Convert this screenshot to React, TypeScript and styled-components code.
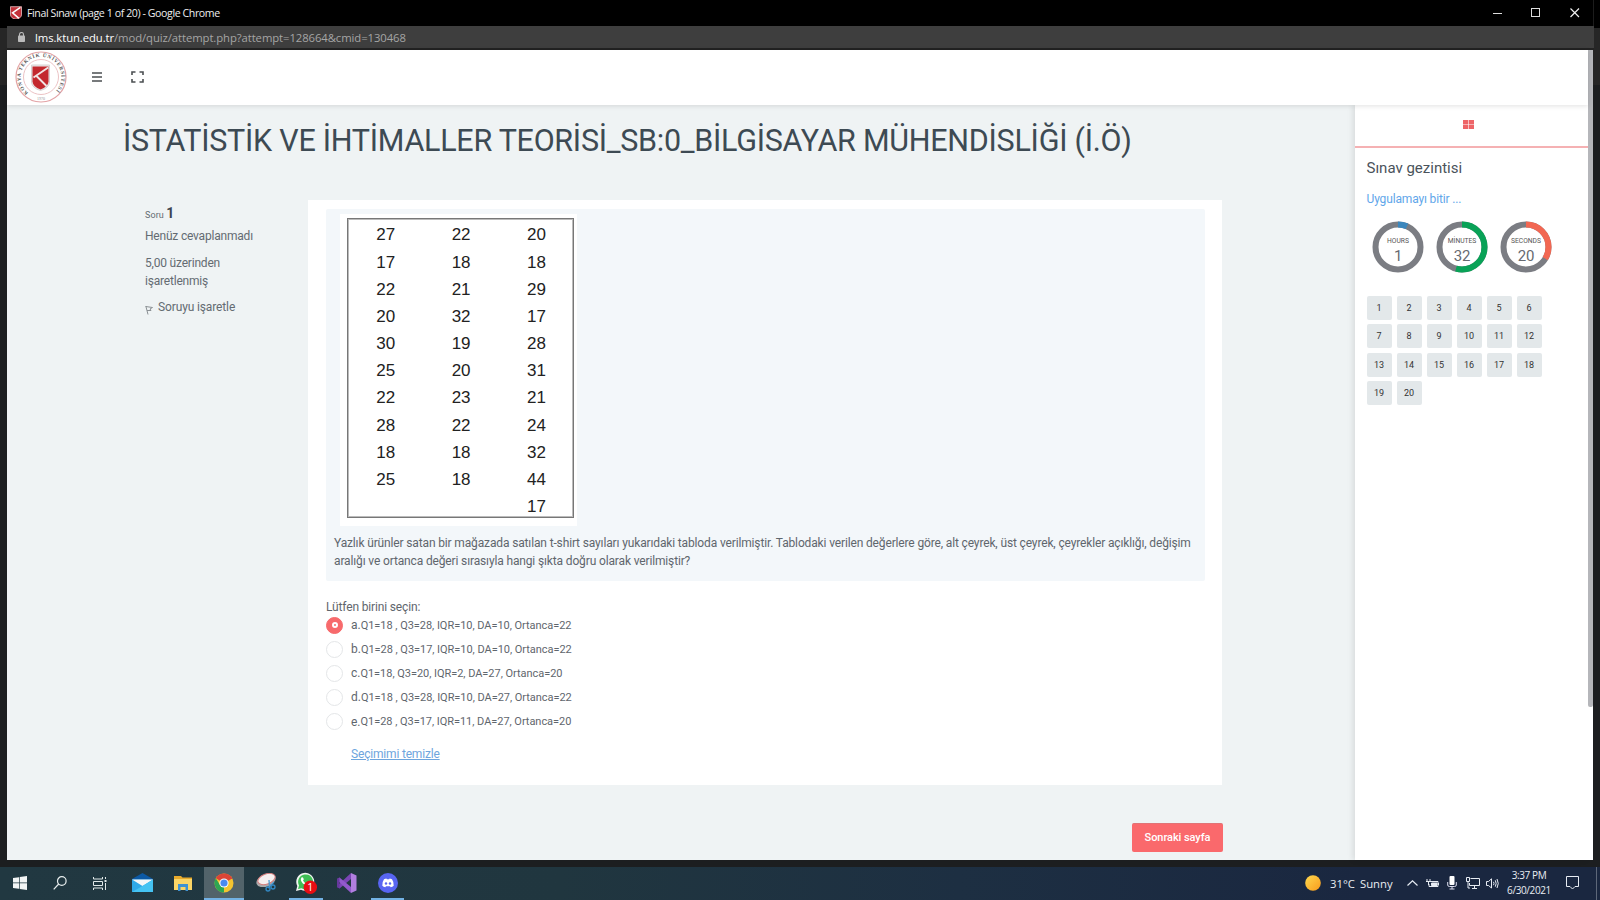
import React from "react";
import styled, { createGlobalStyle } from "styled-components";

const Global = createGlobalStyle`
  *,*::after{box-sizing:border-box}
  html,body{margin:0;padding:0;background:#1b1d1f;overflow:hidden}
  body{font-family:Roboto,"Liberation Sans",sans-serif;color:#5f666d}
  p,h1,h2{margin:0;font-weight:400}
`;
const Screen = styled.div`
  width:1600px;height:900px;display:flex;flex-direction:column;overflow:hidden;
  background:linear-gradient(180deg,#000 0 28px,#262626 28px 85px,#1c1e20 85px 100%);
`;
const ChromeWindow = styled.div`
  width:1587px;height:860px;margin:0 0 7px 7px;display:flex;flex-direction:column;flex:none;
`;
const TitleBar = styled.div`
  height:26px;flex:none;background:#000;display:flex;align-items:center;padding:0 13px 1px 3px;
  border-right:1px solid #1c1c1c;
`;
const WindowTitle = styled.span`
  flex:1;margin-left:5px;color:#eee;font:10.6px "Open Sans","Noto Sans",sans-serif;letter-spacing:-.41px;white-space:nowrap;
`;
const WindowButtons = styled.div`display:flex;gap:29px;align-items:center;`;
const AddressBar = styled.div`
  height:24px;flex:none;background:#3e3e3e;border-bottom:2px solid #222;display:flex;align-items:center;padding-left:11px;
`;
const Url = styled.span`
  margin-left:10px;font:11.3px "Open Sans","Noto Sans",sans-serif;color:#a5a5a5;white-space:nowrap;letter-spacing:-.08px;
  b{font-weight:400;color:#fff}
`;
const Page = styled.div`
  height:810px;display:flex;flex:none;background:#eff3f4;width:1586px;
`;
const PageBody = styled.div`width:1581px;display:flex;flex-direction:column;`;
const ScrollTrack = styled.div`width:5px;background:#fff;`;
const ScrollThumb = styled.div`height:657px;background:#b5b6ba;border-radius:0 0 2px 2px;`;
const NavBar = styled.div`
  height:55px;flex:none;background:#fff;display:flex;align-items:center;padding:0 0 1px 8px;
  box-shadow:0 1px 5px rgba(0,0,0,.12);z-index:1;
`;
const NavIcon = styled.div<{ $left: number }>`margin-left:${p => p.$left}px;display:flex;`;
const Columns = styled.div`flex:1;display:flex;min-height:0;`;
const Main = styled.div`width:1348px;padding:0 132px 0 116px;`;
const CourseTitle = styled.h1`
  font-size:30.5px;line-height:40px;height:95px;padding-top:16px;color:#3d4a53;white-space:nowrap;letter-spacing:-.27px;
`;
const Question = styled.div`display:flex;`;
const Info = styled.div`
  width:185px;padding:4px 50px 0 22px;font-size:12px;line-height:18px;color:#646b72;letter-spacing:-.2px;
`;
const QuestionNo = styled.p`
  font-size:9px;line-height:18px;height:18px;margin-bottom:5px;letter-spacing:.1px;
  b{font-size:14px;font-weight:700;color:#3d4450}
`;
const InfoLine = styled.p`margin-bottom:9px;`;
const FlagLine = styled.div`
  display:flex;align-items:center;gap:4px;margin-top:-1px;letter-spacing:-.13px;
  svg{margin-top:5px}
`;
const Card = styled.div`width:914px;height:585px;background:#fff;padding:9px 18px 0;`;
const Formulation = styled.div`
  height:372px;width:879px;background:#f3f7fa;padding:5px 8px 0;border-radius:2px;
`;
const TableFrame = styled.div`
  width:237px;height:312px;margin-left:6px;padding:4px 3px 0 7px;background:#fff;
`;
const NumberTable = styled.div`
  border:1px solid #777;outline:1px solid #bbb;outline-offset:-2px;height:300px;padding:2.4px 0 0;
  display:grid;grid-template-columns:repeat(3,75.4px);grid-auto-rows:27.18px;
  font:17px/27px "Liberation Sans",sans-serif;color:#222;text-align:center;
`;
const TextBlock = styled.div`padding-top:8px;`;
const QuestionText = styled.p`
  font-size:12px;line-height:18px;white-space:nowrap;letter-spacing:-.143px;
`;
const Prompt = styled.p`font-size:12px;line-height:18px;margin-top:17px;height:18px;letter-spacing:-.15px;`;
const Options = styled.div`margin-top:-3px;`;
const Option = styled.label`display:flex;align-items:center;height:24.15px;`;
const Radio = styled.span<{ $on: boolean }>`
  width:17px;height:17px;border-radius:50%;display:flex;align-items:center;justify-content:center;
  border:1px solid ${p => (p.$on ? "#f76a6c" : "#e4e6e8")};background:${p => (p.$on ? "#f76a6c" : "#fff")};
  &::after{content:"";display:${p => (p.$on ? "block" : "none")};width:6px;height:6px;border:2px solid #fff;border-radius:50%}
`;
const OptionLetter = styled.span`margin-left:8px;font-size:12px;`;
const OptionText = styled.span`font-size:11px;letter-spacing:-.04px;white-space:nowrap;`;
const ClearLink = styled.a`
  display:block;margin:11px 0 0 25px;font-size:12px;line-height:18px;color:#6ea5dd;text-decoration:underline;letter-spacing:-.18px;
`;
const NextButton = styled.button`
  display:block;width:91px;height:29px;margin:38px 0 0 auto;border:0;border-top:1px solid #e07376;border-radius:2px;
  background:#fa696c;color:#fff;font:500 11px Roboto,sans-serif;letter-spacing:-.06px;padding:0 0 2px;
`;
const Drawer = styled.aside`
  width:233px;background:#fff;box-shadow:-2px 0 6px rgba(0,0,0,.1);
`;
const DrawerTab = styled.div`
  height:43px;border-bottom:2px solid #f5b1b3;display:flex;justify-content:center;padding-top:15px;padding-right:6px;
`;
const DrawerBody = styled.div`padding:9px 0 0 11.5px;`;
const DrawerTitle = styled.h2`font-size:15px;line-height:22px;color:#4a535b;`;
const FinishLink = styled.a`display:block;margin-top:11px;font-size:12px;line-height:18px;color:#61a6ea;letter-spacing:-.15px;`;
const Timers = styled.div`display:flex;gap:12px;margin:13px 0 0 5.5px;height:52px;`;
const NumberGrid = styled.div`
  display:grid;grid-template-columns:repeat(6,25px);grid-auto-rows:24px;gap:4.35px 5px;margin-top:23px;
`;
const NumberCell = styled.div`
  background:#e3e8ea;border-radius:2px;color:#333;font-size:9px;display:flex;align-items:center;justify-content:center;
`;
const Taskbar = styled.div`
  height:33px;flex:none;display:flex;justify-content:space-between;
  background:linear-gradient(90deg,#213841 0,#20363f 35%,#1d2f42 60%,#1a2740 85%);
`;
const Apps = styled.div`display:flex;`;
const AppSlot = styled.div<{ $w: number; $active?: boolean; $open?: boolean }>`
  width:${p => p.$w}px;display:flex;align-items:center;justify-content:center;padding-bottom:1px;
  background:${p => (p.$active ? "#52636a" : "transparent")};
  box-shadow:${p => (p.$active || p.$open ? "inset 0 -2px #73b2e4" : "none")};
`;
const Tray = styled.div`
  display:flex;align-items:center;color:#e9edf2;font:11.3px "Open Sans","Noto Sans",sans-serif;white-space:nowrap;
`;
const TrayItem = styled.div<{ $w: number }>`width:${p => p.$w}px;display:flex;align-items:center;flex:none;padding-bottom:1px;`;
const Clock = styled.div`
  width:58px;font-size:10px;line-height:15px;text-align:center;letter-spacing:-.4px;padding:0 2px 2px 0;
`;
const ShowDesktop = styled.div`width:4px;height:33px;border-left:1px solid #5d6779;`;

const Shield = ({ size = 12 }: { size?: number }) => (
  <svg width={size} height={size * 1.15} viewBox="0 0 24 28">
    <path d="M0 1H24V18Q23 26 12 28Q1 26 0 18Z" fill="#c3323a" />
    <path d="M21 3L5 14L18 25" stroke="#fff" strokeWidth="3" fill="none" />
    <path d="M.8 1.500H23.200V18Q22 25 12 27Q2 25 .8 18Z" stroke="#d8c4c5" strokeWidth="1.600" fill="none" />
  </svg>
);

const Seal = () => (
  <svg width="52" height="52" viewBox="0 0 52 52">
    <defs>
      <path id="sealArc" d="M13.2 41.800A20.300 20.300 0 1 1 38.800 41.800" />
    </defs>
    <circle cx="26" cy="26" r="25" fill="#fff" stroke="#e3a3a6" strokeWidth="1.200" />
    <circle cx="26" cy="26" r="17.500" fill="none" stroke="#ecc3c5" strokeWidth="1" />
    <text fontSize="5.200" fontWeight="700" fill="#555" fontFamily="Liberation Serif, serif" letterSpacing=".7">
      <textPath href="#sealArc">KONYA TEKNİK ÜNİVERSİTESİ</textPath>
    </text>
    <text x="26" y="48.500" textAnchor="middle" fontSize="4" fill="#999" fontFamily="Liberation Serif, serif">1970</text>
    <path d="M16.500 14H34.500V31Q34 37 25.500 39.500Q17 37 16.500 31Z" fill="#ebe7e7" stroke="#d8d2d3" />
    <path d="M17.500 15.500H33.500V30.500Q33 36 25.500 38.500Q18 36 17.500 30.500Z" fill="#c3282e" />
    <path d="M33.200 16.500L18.500 26.500M21.500 25L31.500 35" stroke="#f1e4e4" strokeWidth="1.900" fill="none" />
  </svg>
);

const Ring = ({ label, value, fraction, color }: { label: string; value: number; fraction: number; color: string }) => {
  const c = 2 * Math.PI * 22.5;
  return (
    <svg width="52" height="52" viewBox="0 0 52 52">
      <circle cx="26" cy="26" r="22.500" fill="none" stroke="#7b7d83" strokeWidth="6" />
      <circle cx="26" cy="26" r="22.500" fill="none" stroke={color} strokeWidth="6"
        strokeDasharray={`${c * fraction} ${c}`} transform="rotate(-90 26 26)" />
      <text x="26" y="22" textAnchor="middle" fontSize="6.700" fill="#555" fontFamily="Roboto, sans-serif">{label}</text>
      <text x="26" y="40" textAnchor="middle" fontSize="15" fill="#666a70" fontFamily="Roboto, sans-serif" letterSpacing="-.3">{value}</text>
    </svg>
  );
};

const rows = [
  [27, 22, 20], [17, 18, 18], [22, 21, 29], [20, 32, 17], [30, 19, 28], [25, 20, 31],
  [22, 23, 21], [28, 22, 24], [18, 18, 32], [25, 18, 44], ["", "", 17],
];
const options = [
  ["a.", "Q1=18 , Q3=28, IQR=10, DA=10, Ortanca=22"],
  ["b.", "Q1=28 , Q3=17, IQR=10, DA=10, Ortanca=22"],
  ["c.", "Q1=18, Q3=20, IQR=2, DA=27, Ortanca=20"],
  ["d.", "Q1=18 , Q3=28, IQR=10, DA=27, Ortanca=22"],
  ["e.", "Q1=28 , Q3=17, IQR=11, DA=27, Ortanca=20"],
];

const WindowsIcon = () => (
  <svg width="14" height="14" viewBox="0 0 14 14" fill="#f2f5f5"><path d="M0 2L6 1.200V6.600H0ZM6.700 1.100L14 0V6.600H6.700ZM0 7.300H6V12.800L0 12ZM6.700 7.300H14V14L6.700 13Z" /></svg>
);
const SearchIcon = () => (
  <svg width="14" height="14" viewBox="0 0 14 14" fill="none" stroke="#e8eeee" strokeWidth="1.200"><circle cx="8.800" cy="5" r="4.300" /><path d="M5.700 8L.7 13.300" /></svg>
);
const TaskViewIcon = () => (
  <svg width="14" height="13" viewBox="0 0 14 13" fill="none" stroke="#e0e8e8"><path d="M.5 0V2H9.500V0M.5 13V11H9.500V13M.5 4.500H9.500V8.500H.5ZM12.500 0V2M12.500 6V13" /><path d="M11.500 4H13.500" strokeWidth="2" /></svg>
);
const MailIcon = () => (
  <svg width="21" height="20" viewBox="0 0 21 20"><path d="M0 6L10.500 0L21 6V9H0Z" fill="#0c59a4" /><path d="M0 6.500H21V19H0Z" fill="#2fa9e8" /><path d="M0 6.500H21L10.500 13Z" fill="#f4f6f7" /><path d="M21 6.500V19H0L10.500 13Z" fill="#45c3f2" /></svg>
);
const FolderIcon = () => (
  <svg width="22" height="17" viewBox="0 0 22 17"><path d="M0 1H7L8.500 2.500H18V15H0Z" fill="#e8ab2c" /><path d="M0 4H18V15H0Z" fill="#fbd566" /><path d="M4 16V9H14V16H11.500V12H6.500V16Z" fill="#3f92d2" /></svg>
);
const ChromeIcon = () => (
  <svg width="20" height="20" viewBox="0 0 20 20"><circle cx="10" cy="10" r="9.500" fill="#f4c430" /><path d="M10 10L1.800 5.200A9.500 9.500 0 0 1 18.300 5.500Z" fill="#dc4437" /><path d="M10 10L10 19.500A9.500 9.500 0 0 1 1.800 5.200L6 12Z" fill="#2ea653" /><path d="M10 5.500H18.300L17 4Z" fill="#dc4437" /><circle cx="10" cy="10" r="4.600" fill="#fff" /><circle cx="10" cy="10" r="3.600" fill="#4a8af0" /></svg>
);
const SnipIcon = () => (
  <svg width="21" height="20" viewBox="0 0 21 20"><ellipse cx="10" cy="7.500" rx="10" ry="6" transform="rotate(-20 10 7.500)" fill="#a9a9ab" /><ellipse cx="10.500" cy="6" rx="9" ry="5" transform="rotate(-20 10.500 6)" fill="#f5efef" stroke="#d57d7c" /><path d="M13 7L13.500 14M18 9L12 15" stroke="#4c9ad0" strokeWidth="1.300" /><circle cx="12" cy="16" r="2" fill="none" stroke="#3287c2" strokeWidth="1.300" /><circle cx="17" cy="14" r="2" fill="none" stroke="#3287c2" strokeWidth="1.300" /></svg>
);
const WhatsAppIcon = () => (
  <svg width="22" height="22" viewBox="0 0 22 22"><path d="M1 19L2.300 14A9 9 0 1 1 6 17.700Z" fill="#f2f5f2" /><path d="M3 17L4 13.500A7.500 7.500 0 1 1 6.500 16.200Z" fill="#3fbf55" /><path d="M6.500 5.500C7 5 8 5 8.300 6L8.800 7.500L8 8.500Q9 10.500 11 11.500L12 10.500L14 11.500Q14 14 11.500 13.500Q7 12 5.800 8Q5.800 6.500 6.500 5.500Z" fill="#fff" /><circle cx="15.300" cy="15.300" r="6.700" fill="#e90d12" /><text x="15.300" y="19" fill="#fff" fontSize="10.500" textAnchor="middle" fontFamily="Open Sans, sans-serif">1</text></svg>
);
const VsIcon = () => (
  <svg width="20" height="20" viewBox="0 0 20 20"><path d="M14 0L19.500 2.500V17.500L14 20Z" fill="#b17fe0" /><path d="M14 0V6L2.500 15.500L0 14V13L14 0Z" fill="#7b45b5" /><path d="M14 20V14L2.500 4.500L0 6V7L14 20Z" fill="#9259cc" /><path d="M0 6L2.500 4.500V15.500L0 14Z" fill="#67389c" /></svg>
);
const DiscordIcon = () => (
  <svg width="20" height="20" viewBox="0 0 20 20"><circle cx="10" cy="10" r="10" fill="#5865f2" /><path d="M6 6.200Q7.500 5.500 8.400 5.500L8.800 6.200H11.200L11.600 5.500Q12.500 5.500 14 6.200Q16 9 15.700 12.800Q14.500 14 12.700 14.200L12 13.200H8L7.300 14.200Q5.500 14 4.300 12.800Q4 9 6 6.200Z" fill="#fff" /><circle cx="8" cy="10.500" r="1.200" fill="#5865f2" /><circle cx="12" cy="10.500" r="1.200" fill="#5865f2" /></svg>
);

export default function App() {
  return (
    <>
      <Global />
      <Screen>
        <ChromeWindow>
          <TitleBar>
            <Shield />
            <WindowTitle>Final Sınavı (page 1 of 20) - Google Chrome</WindowTitle>
            <WindowButtons>
              <svg width="10" height="10" stroke="#ddd"><path d="M1 5.500H10" /></svg>
              <svg width="10" height="10" fill="none" stroke="#ddd"><rect x=".5" y=".5" width="8" height="8" /></svg>
              <svg width="10" height="10" fill="none" stroke="#eee" strokeWidth="1.200"><path d="M.5 .5L9 9M9 .5L.5 9" /></svg>
            </WindowButtons>
          </TitleBar>
          <AddressBar>
            <svg width="7" height="10" viewBox="0 0 7 10"><rect y="3.500" width="7" height="6.500" rx=".8" fill="#bbb" /><path d="M1.500 4V2.500A2 2 0 0 1 5.500 2.500V4" fill="none" stroke="#bbb" strokeWidth="1.100" /></svg>
            <Url><b>lms.ktun.edu.tr</b>/mod/quiz/attempt.php?attempt=128664&amp;cmid=130468</Url>
          </AddressBar>
          <Page>
            <PageBody>
              <NavBar>
                <Seal />
                <NavIcon $left={25}><svg width="10" height="10" stroke="#4b4f52" strokeWidth="1.500"><path d="M0 1H10M0 5H10M0 9H10" /></svg></NavIcon>
                <NavIcon $left={29}><svg width="13" height="12" fill="none" stroke="#4b4f52" strokeWidth="1.600"><path d="M1 4V1H4.500M8.500 1H12V4M12 8V11H8.500M4.500 11H1V8" /></svg></NavIcon>
              </NavBar>
              <Columns>
                <Main>
                  <CourseTitle>İSTATİSTİK VE İHTİMALLER TEORİSİ_SB:0_BİLGİSAYAR MÜHENDİSLİĞİ (İ.Ö)</CourseTitle>
                  <Question>
                    <Info>
                      <QuestionNo>Soru <b>1</b></QuestionNo>
                      <InfoLine>Henüz cevaplanmadı</InfoLine>
                      <InfoLine>5,00 üzerinden işaretlenmiş</InfoLine>
                      <FlagLine>
                        <svg width="9" height="10" fill="none" stroke="#8b9094"><path d="M.8 1L3 9.500M.8 1.500L7.500 2.500L5 4L6 5.500L2 5.500" /></svg>
                        Soruyu işaretle
                      </FlagLine>
                    </Info>
                    <Card>
                      <Formulation>
                        <TableFrame>
                          <NumberTable>{rows.flat().map((n, i) => <span key={i}>{n}</span>)}</NumberTable>
                        </TableFrame>
                        <TextBlock>
                          <QuestionText>Yazlık ürünler satan bir mağazada satılan t-shirt sayıları yukarıdaki tabloda verilmiştir. Tablodaki verilen değerlere göre, alt çeyrek, üst çeyrek, çeyrekler açıklığı, değişim</QuestionText>
                          <QuestionText>aralığı ve ortanca değeri sırasıyla hangi şıkta doğru olarak verilmiştir?</QuestionText>
                        </TextBlock>
                      </Formulation>
                      <Prompt>Lütfen birini seçin:</Prompt>
                      <Options>
                        {options.map(([l, t], i) => (
                          <Option key={l}><Radio $on={i === 0} /><OptionLetter>{l}</OptionLetter><OptionText>{t}</OptionText></Option>
                        ))}
                      </Options>
                      <ClearLink>Seçimimi temizle</ClearLink>
                    </Card>
                  </Question>
                  <NextButton>Sonraki sayfa</NextButton>
                </Main>
                <Drawer>
                  <DrawerTab>
                    <svg width="11" height="9" fill="#ee6568"><path d="M0 0H5.200V4.200H0ZM5.800 0H11V4.200H5.800ZM0 4.800H5.200V9H0ZM5.800 4.800H11V9H5.800Z" /></svg>
                  </DrawerTab>
                  <DrawerBody>
                    <DrawerTitle>Sınav gezintisi</DrawerTitle>
                    <FinishLink>Uygulamayı bitir ...</FinishLink>
                    <Timers>
                      <Ring label="HOURS" value={1} fraction={0.065} color="#3b87bd" />
                      <Ring label="MİNUTES" value={32} fraction={0.54} color="#09a257" />
                      <Ring label="SECONDS" value={20} fraction={0.335} color="#f26752" />
                    </Timers>
                    <NumberGrid>{Array.from({ length: 20 }, (_, i) => <NumberCell key={i}>{i + 1}</NumberCell>)}</NumberGrid>
                  </DrawerBody>
                </Drawer>
              </Columns>
            </PageBody>
            <ScrollTrack><ScrollThumb /></ScrollTrack>
          </Page>
        </ChromeWindow>
        <Taskbar>
          <Apps>
            <AppSlot $w={40}><WindowsIcon /></AppSlot>
            <AppSlot $w={40}><SearchIcon /></AppSlot>
            <AppSlot $w={40}><TaskViewIcon /></AppSlot>
            <AppSlot $w={45}><MailIcon /></AppSlot>
            <AppSlot $w={39}><FolderIcon /></AppSlot>
            <AppSlot $w={40} $active><ChromeIcon /></AppSlot>
            <AppSlot $w={45}><SnipIcon /></AppSlot>
            <AppSlot $w={34} $open><WhatsAppIcon /></AppSlot>
            <AppSlot $w={48}><VsIcon /></AppSlot>
            <AppSlot $w={33} $open><DiscordIcon /></AppSlot>
          </Apps>
          <Tray>
            <TrayItem $w={25}><svg width="16" height="16"><defs><linearGradient id="sun" x1="0" y1="0" x2="1" y2="1"><stop stopColor="#ffd94f" /><stop offset="1" stopColor="#f79a1c" /></linearGradient></defs><circle cx="8" cy="8" r="7.800" fill="url(#sun)" /></svg></TrayItem>
            <TrayItem $w={30}>31°C</TrayItem>
            <TrayItem $w={47}>Sunny</TrayItem>
            <TrayItem $w={19}><svg width="11" height="6" fill="none" stroke="#e6ebf2" strokeWidth="1.200"><path d="M.5 5.500L5.500 .8L10.500 5.500" /></svg></TrayItem>
            <TrayItem $w={21}><svg width="14" height="11" fill="none" stroke="#e6ebf2"><path d="M4 3.500H12V8.500H3V6" /><path d="M5.500 5H11V7.500H5.500Z" fill="#e6ebf2" /><path d="M12.500 5V7M1 1V3M4 1V3M0 3.500H5M2.500 3V7" /></svg></TrayItem>
            <TrayItem $w={19}><svg width="10" height="14"><rect x="2.500" width="5" height="9" rx="1" fill="#fff" /><path d="M.7 6V9Q.7 10.500 2.500 10.500H7.500Q9.300 10.500 9.300 9V6M5 10V13M2.500 13H7.500" fill="none" stroke="#dde" /></svg></TrayItem>
            <TrayItem $w={20}><svg width="14" height="12" fill="none" stroke="#e6ebf2"><path d="M4.500 1.500H13.500V8.500H3.500V6M8.500 9V11M6 11.500H11M.5 .5H3.500V4.500H.5ZM2 5V11H4" /></svg></TrayItem>
            <TrayItem $w={15}><svg width="13" height="11" fill="none" stroke="#e6ebf2"><path d="M.5 3.500H2.500L5.500 .8V10L2.500 7.500H.5ZM7.500 3.800Q8.500 5.500 7.500 7.200M9.300 2.300Q11 5.500 9.300 8.700M11 1Q13.500 5.500 11 10" /></svg></TrayItem>
            <Clock>3:37 PM<br />6/30/2021</Clock>
            <TrayItem $w={37}><svg width="31" height="14" fill="none" stroke="#e6ebf2"><path d="M7.500 .5H19.500V10.500H16L13.500 13L11 10.500H7.500Z" /></svg></TrayItem>
            <ShowDesktop />
          </Tray>
        </Taskbar>
      </Screen>
    </>
  );
}
